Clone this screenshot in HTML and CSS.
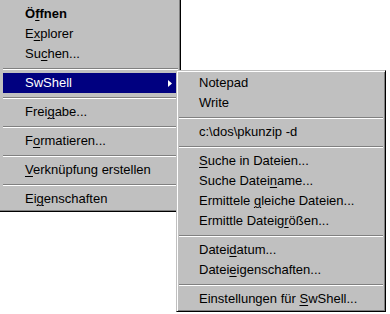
FILE: index.html
```html
<!DOCTYPE html>
<html lang="de">
<head>
    <meta charset="UTF-8">
    <title>Kontextmenü</title>
    <link rel="stylesheet" href="styles.css">
</head>
<body>
    <div class="desk">
        <div class="menu menu-main">
            <div class="item bold">Ö<u>f</u>fnen</div>
            <div class="item">E<u>x</u>plorer</div>
            <div class="item">Su<u>c</u>hen...</div>
            <div class="sep"></div>
            <div class="item active">
                <span>SwShell</span>
                <svg class="arrow" width="4" height="7" viewBox="0 0 4 7"><polygon points="0,0 4,3.5 0,7"/></svg>
            </div>
            <div class="sep"></div>
            <div class="item">Frei<u>g</u>abe...</div>
            <div class="sep"></div>
            <div class="item">F<u>o</u>rmatieren...</div>
            <div class="sep"></div>
            <div class="item"><u>V</u>erknüpfung erstellen</div>
            <div class="sep"></div>
            <div class="item">Ei<u>g</u>enschaften</div>
        </div>

        <div class="menu menu-sub">
            <div class="item">Notepad</div>
            <div class="item">Write</div>
            <div class="sep"></div>
            <div class="item">c:\dos\pkunzip -d</div>
            <div class="sep"></div>
            <div class="item"><u>S</u>uche in Dateien...</div>
            <div class="item">Suche Datei<u>n</u>ame...</div>
            <div class="item">Ermittele <u>g</u>leiche Dateien...</div>
            <div class="item">Ermittle Dateig<u>r</u>ößen...</div>
            <div class="sep"></div>
            <div class="item">Datei<u>d</u>atum...</div>
            <div class="item">Datei<u>e</u>igenschaften...</div>
            <div class="sep"></div>
            <div class="item">Einstellungen für <u>S</u>wShell...</div>
        </div>
    </div>
</body>
</html>
```

FILE: styles.css
```css
* {
    margin: 0;
    padding: 0;
    box-sizing: border-box;
}

body {
    background: #fff;
    font-family: "Liberation Sans", Arial, sans-serif;
    font-size: 13px;
    color: #000;
}

.desk {
    position: relative;
    width: 390px;
    height: 314px;
    overflow: hidden;
}

.menu {
    background: #c0c0c0;
}

/* main context menu, cut off at the top and left edge */
.menu-main {
    width: 181px;
    padding: 4px 2px 2px 3px;
    border-right: 1px solid #000;
    border-bottom: 1px solid #000;
    box-shadow: inset -1px -1px 0 #808080;
}

.menu-main .item {
    padding-left: 22px;
}

/* SwShell submenu */
.menu-sub {
    position: absolute;
    left: 176px;
    top: 70px;
    width: 210px;
    padding: 2px;
    border: 1px solid #c0c0c0;
    border-right-color: #000;
    border-bottom-color: #000;
    box-shadow: inset 1px 1px 0 #fff, inset -1px -1px 0 #808080;
}

.menu-sub .item {
    padding-left: 20px;
}

.item {
    height: 20px;
    line-height: 20px;
    white-space: nowrap;
}

.item u {
    text-decoration: underline;
    text-decoration-thickness: 1px;
    text-underline-offset: 2px;
}

.bold {
    font-weight: bold;
}

.active {
    display: flex;
    align-items: center;
    background: #000080;
    color: #fff;
}

.arrow {
    margin-left: auto;
    margin-right: 6px;
    fill: #fff;
}

.sep {
    height: 9px;
    padding-top: 4px;
}

.sep::after {
    content: "";
    display: block;
    border-top: 1px solid #808080;
    border-bottom: 1px solid #fff;
}
```
